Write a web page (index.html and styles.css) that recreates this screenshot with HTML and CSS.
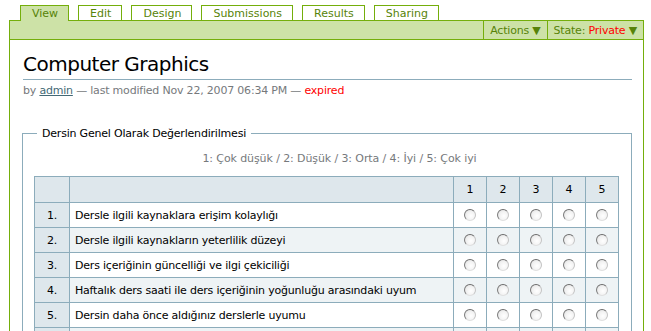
FILE: index.html
```html
<!DOCTYPE html>
<html lang="tr">
<head>
    <meta charset="UTF-8">
    <title>Computer Graphics</title>
    <link rel="stylesheet" href="styles.css">
</head>
<body>
    <div class="page">
        <ul class="content-views">
            <li class="selected"><a href="#">View</a></li>
            <li><a href="#">Edit</a></li>
            <li><a href="#">Design</a></li>
            <li><a href="#">Submissions</a></li>
            <li><a href="#">Results</a></li>
            <li><a href="#">Sharing</a></li>
        </ul>
        <div class="action-bar">
            <span class="action-menu">Actions ▼</span>
            <span class="action-menu">State: <span class="state-private">Private</span> ▼</span>
        </div>
        <div class="content">
            <h1 class="document-heading">Computer Graphics</h1>
            <div class="byline">
                by <a href="#">admin</a> — last modified Nov 22, 2007 06:34 PM — <span class="expired">expired</span>
            </div>

            <fieldset class="question-group">
                <legend>Dersin Genel Olarak Değerlendirilmesi</legend>
                <p class="scale-note">1: Çok düşük / 2: Düşük / 3: Orta / 4: İyi / 5: Çok iyi</p>
                <table class="matrix">
                    <tr>
                        <th class="num"></th>
                        <th></th>
                        <th class="opt">1</th>
                        <th class="opt">2</th>
                        <th class="opt">3</th>
                        <th class="opt">4</th>
                        <th class="opt">5</th>
                    </tr>
                    <tr>
                        <td class="num">1.</td>
                        <td>Dersle ilgili kaynaklara erişim kolaylığı</td>
                        <td class="opt"><input type="radio" name="q1"></td>
                        <td class="opt"><input type="radio" name="q1"></td>
                        <td class="opt"><input type="radio" name="q1"></td>
                        <td class="opt"><input type="radio" name="q1"></td>
                        <td class="opt"><input type="radio" name="q1"></td>
                    </tr>
                    <tr class="even">
                        <td class="num">2.</td>
                        <td>Dersle ilgili kaynakların yeterlilik düzeyi</td>
                        <td class="opt"><input type="radio" name="q2"></td>
                        <td class="opt"><input type="radio" name="q2"></td>
                        <td class="opt"><input type="radio" name="q2"></td>
                        <td class="opt"><input type="radio" name="q2"></td>
                        <td class="opt"><input type="radio" name="q2"></td>
                    </tr>
                    <tr>
                        <td class="num">3.</td>
                        <td>Ders içeriğinin güncelliği ve ilgi çekiciliği</td>
                        <td class="opt"><input type="radio" name="q3"></td>
                        <td class="opt"><input type="radio" name="q3"></td>
                        <td class="opt"><input type="radio" name="q3"></td>
                        <td class="opt"><input type="radio" name="q3"></td>
                        <td class="opt"><input type="radio" name="q3"></td>
                    </tr>
                    <tr class="even">
                        <td class="num">4.</td>
                        <td>Haftalık ders saati ile ders içeriğinin yoğunluğu arasındaki uyum</td>
                        <td class="opt"><input type="radio" name="q4"></td>
                        <td class="opt"><input type="radio" name="q4"></td>
                        <td class="opt"><input type="radio" name="q4"></td>
                        <td class="opt"><input type="radio" name="q4"></td>
                        <td class="opt"><input type="radio" name="q4"></td>
                    </tr>
                    <tr>
                        <td class="num">5.</td>
                        <td>Dersin daha önce aldığınız derslerle uyumu</td>
                        <td class="opt"><input type="radio" name="q5"></td>
                        <td class="opt"><input type="radio" name="q5"></td>
                        <td class="opt"><input type="radio" name="q5"></td>
                        <td class="opt"><input type="radio" name="q5"></td>
                        <td class="opt"><input type="radio" name="q5"></td>
                    </tr>
                    <tr class="even">
                        <td class="num"></td>
                        <td></td>
                        <td class="opt"></td>
                        <td class="opt"></td>
                        <td class="opt"></td>
                        <td class="opt"></td>
                        <td class="opt"></td>
                    </tr>
                </table>
            </fieldset>
        </div>
    </div>
</body>
</html>
```

FILE: styles.css
```css
body {
    font-family: "DejaVu Sans", Verdana, sans-serif;
    font-size: 11px;
    letter-spacing: -0.2px;
    color: #000;
    background: white;
    margin: 0;
}
.page {
    padding: 5px 7px 0 9px;
}
a {
    color: #436976;
}
.content-views {
    list-style: none;
    margin: 0;
    padding: 0 0 0 11px;
    display: flex;
    gap: 9px;
}
.content-views li a {
    display: block;
    height: 14px;
    line-height: 15px;
    padding: 0 10px 0 11px;
    border: 1px solid #74ae0b;
    border-bottom: none;
    background: white;
    color: #578308;
    text-decoration: none;
    letter-spacing: 0;
}
.content-views li.selected a {
    background: #cde2a7;
    height: 15px;
    margin-bottom: -1px;
    position: relative;
}
.action-bar {
    height: 18px;
    background: #cde2a7;
    border: 1px solid #74ae0b;
    display: flex;
    justify-content: flex-end;
}
.action-menu {
    border-left: 1px solid #74ae0b;
    line-height: 19px;
    padding: 0 6px;
    color: #578308;
}
.state-private {
    color: #ff0000;
}
.content {
    border-left: 1px solid #74ae0b;
    border-right: 1px solid #74ae0b;
    padding: 11px 11px 20px 13px;
}
.document-heading {
    font-size: 20px;
    letter-spacing: -0.5px;
    font-weight: normal;
    margin: 0;
    padding-bottom: 2px;
    border-bottom: 1px solid #8cacbb;
    line-height: 26px;
}
.byline {
    color: #76797c;
    margin-top: 4px;
}
.expired {
    color: #ff0000;
}
.question-group {
    border: 1px solid #8cacbb;
    margin: 30px 0 0 -1px;
    padding: 0 12px 0 11px;
}
.question-group legend {
    padding: 0 5px;
    margin-left: 3px;
}
.scale-note {
    letter-spacing: -0.1px;
    text-align: center;
    color: #76797c;
    margin: 12px 0 11px;
    padding-left: 26px;
}
.matrix {
    width: 100%;
    border-collapse: collapse;
}
.matrix th,
.matrix td {
    border: 1px solid #8cacbb;
    height: 24px;
    padding: 0 5px;
    text-align: left;
    font-weight: normal;
}
.matrix th {
    background: #dee7ec;
    height: 25px;
}
.matrix .num {
    width: 24px;
    background: #dee7ec;
    text-align: center;
}
.matrix .opt {
    width: 22px;
    text-align: center;
}
.matrix tr.even td {
    background: #eef3f5;
}
.matrix tr.even td.num {
    background: #dee7ec;
}
.matrix input[type="radio"] {
    appearance: none;
    width: 12px;
    height: 12px;
    margin: 3px 0 0;
    border-radius: 50%;
    border: 1px solid;
    border-color: #6b6b6b #c4c4c4 #e0e0e0 #7c7c7c;
    background: radial-gradient(circle at 60% 60%, #ffffff 0%, #f2f2f2 50%, #dcdcdc 100%);
}
```
